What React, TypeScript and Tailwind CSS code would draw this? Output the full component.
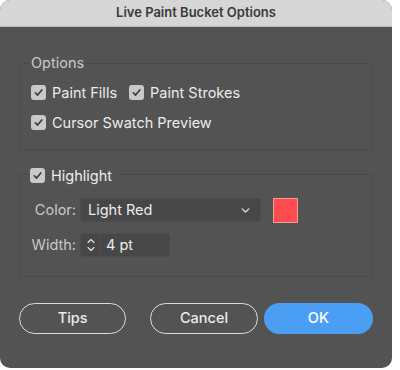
import { ChevronDown, ChevronUp } from "lucide-react";

function Check({ label }: { label: string }) {
  return (
    <label className="flex items-center gap-[6px] text-[14.5px] text-[#ececec]">
      <span className="flex h-[15px] w-[15px] items-center justify-center rounded-[3px] bg-[#c9c9c9]">
        <svg width="11" height="11" viewBox="0 0 12 12" fill="none">
          <path d="M2.5 6.3 L5 8.8 L9.6 3.2" stroke="#3b3b3b" strokeWidth="1.8" strokeLinecap="round" strokeLinejoin="round" />
        </svg>
      </span>
      {label}
    </label>
  );
}

export default function App() {
  return (
    <div className="h-[370px] w-[400px] bg-white font-['Inter',sans-serif]">
      <div className="flex h-[368px] w-[392px] flex-col overflow-hidden rounded-[10px] bg-[#535353]">
        <div className="flex h-[27px] items-center justify-center border-b border-[#b8b8b8] bg-[#d6d6d6] text-[13px] font-semibold text-[#3a3a3a]">
          Live Paint Bucket Options
        </div>

        <div className="flex flex-col px-[19px] pt-[36px]">
          <div className="relative rounded-[3px] border border-[#4a4a4a] px-[11px] pb-[15px] pt-[18px]">
            <span className="absolute left-[10px] top-[-12px] bg-[#535353] px-[1px] text-[14.5px] text-[#c9c9c9]">Options</span>
            <div className="flex gap-[12px]">
              <Check label="Paint Fills" />
              <Check label="Paint Strokes" />
            </div>
            <div className="mt-[8px]">
              <Check label="Cursor Swatch Preview" />
            </div>
          </div>

          <div className="relative mt-[24px] rounded-[3px] border border-[#4a4a4a] px-[10px] pb-[19px] pt-[23px]">
            <span className="absolute left-[10px] top-[-10px] bg-[#535353] pr-[4px]">
              <Check label="Highlight" />
            </span>
            <div className="flex items-center">
              <span className="w-[46px] text-right text-[14.5px] text-[#c9c9c9]">Color:</span>
              <div className="ml-[4px] flex h-[24px] w-[181px] items-center justify-between rounded-[3px] border border-[#4d4d4d] bg-[#474747] pl-[7px] pr-[8px] text-[14.5px] text-[#ececec]">
                Light Red
                <ChevronDown size={13} strokeWidth={2.5} color="#e6e6e6" />
              </div>
              <div className="ml-[12px] h-[25px] w-[25px] border border-[#f19a9a] bg-[#fd4b4f]" />
            </div>
            <div className="mt-[10px] flex items-center">
              <span className="w-[46px] text-right text-[14.5px] text-[#c9c9c9]">Width:</span>
              <div className="ml-[4px] flex h-[24px] w-[90px] items-stretch rounded-[3px] border border-[#4d4d4d] bg-[#474747]">
                <div className="flex w-[20px] flex-col items-center justify-center border-r border-[#4d4d4d]">
                  <ChevronUp size={12} strokeWidth={2.2} color="#e6e6e6" className="-mb-[2px]" />
                  <ChevronDown size={12} strokeWidth={2.2} color="#e6e6e6" className="-mt-[2px]" />
                </div>
                <span className="flex items-center pl-[5px] text-[14.5px] text-[#ececec]">4 pt</span>
              </div>
            </div>
          </div>

          <div className="mt-[26px] flex items-center">
            <button className="h-[31px] w-[109px] rounded-full border border-[#dcdcdc] text-[14.5px] font-medium text-[#ececec]">Tips</button>
            <button className="ml-[24px] h-[31px] w-[109px] rounded-full border border-[#dcdcdc] text-[14.5px] font-medium text-[#ececec]">Cancel</button>
            <button className="ml-[6px] h-[31px] w-[111px] rounded-full bg-[#4a9ff5] text-[14.5px] font-medium text-white">OK</button>
          </div>
        </div>
      </div>
    </div>
  );
}
